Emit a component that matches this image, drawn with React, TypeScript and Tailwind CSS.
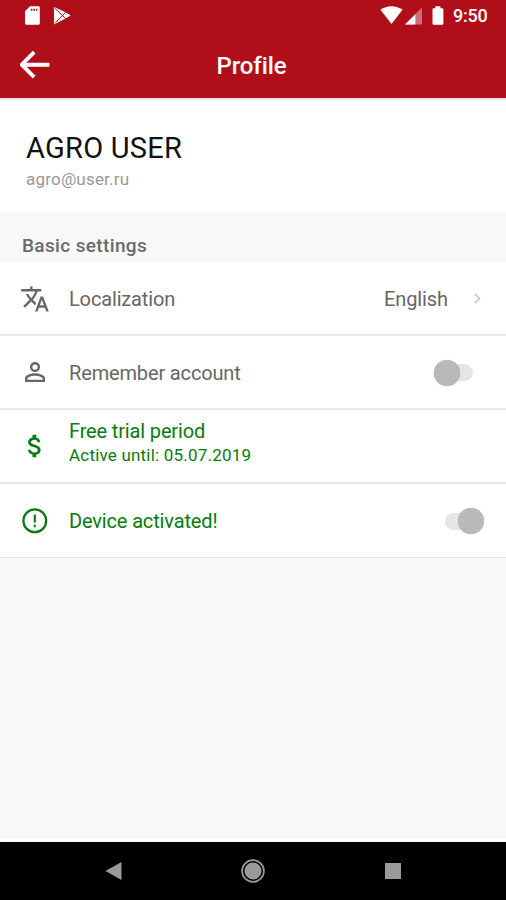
import type { ReactNode } from "react";
import { MdAttachMoney, MdPersonOutline, MdTranslate } from "react-icons/md";

const StatusBar = () => (
  <div className="flex h-8 items-center justify-between pl-6 pr-[17px] text-white">
    <div className="flex items-center">
      <svg className="h-5 w-4" viewBox="0 0 16 20">
        <path
          fill="currentColor"
          fillRule="evenodd"
          d="M6 0.2h8.4a1.4 1.4 0 0 1 1.4 1.4v15.6a1.6 1.6 0 0 1-1.6 1.6H2.6A1.6 1.6 0 0 1 1 17.2V5.2zM6.8 2.8v2h1.6v-2zM9.4 2.8v2h1.6v-2zM12 2.8v2h1.4v-2z"
        />
      </svg>
      <svg className="ml-[13px] h-5 w-[18px]" viewBox="0 0 18 20">
        <path fill="currentColor" d="M1 1 12.5 6.3 17.6 9.4 12.5 12.6 1 18.4z" />
        <path
          d="M1.8 2.2 12.8 12.8M1.8 17.4 12.8 6.2"
          fill="none"
          stroke="#b00f19"
          strokeWidth="1"
        />
      </svg>
    </div>
    <div className="flex items-center">
      <svg className="h-5 w-[23px]" viewBox="0 0 23 20">
        <path fill="currentColor" d="M0.5 3.8C7-1 16-1 22.5 3.8L11.5 18z" />
      </svg>
      <svg className="ml-[2px] h-5 w-[17px]" viewBox="0 0 17 20">
        <path fill="currentColor" opacity="0.4" d="M17 1.6v17H0z" />
        <path fill="currentColor" d="M10.4 8.2v10.4H0z" />
      </svg>
      <svg className="ml-[10px] h-5 w-[12px]" viewBox="0 0 12 20">
        <path
          fill="currentColor"
          d="M3.4 0.3h5v2h1.8a1.2 1.2 0 0 1 1.2 1.2v14a1.2 1.2 0 0 1-1.2 1.2H1.7a1.2 1.2 0 0 1-1.2-1.2v-14a1.2 1.2 0 0 1 1.2-1.2h1.7z"
        />
      </svg>
      <span className="ml-[9px] w-[36px] whitespace-nowrap text-lg font-medium leading-none tracking-[-0.2px]">9:50</span>
    </div>
  </div>
);

const Header = () => (
  <header className="h-[98px] shrink-0 bg-[#b00f19]">
    <StatusBar />
    <div className="grid h-[66px] grid-cols-[1fr_auto_1fr] items-center pl-5 pr-[23px] text-white">
      <button aria-label="Back" className="w-[30px]">
        <svg className="h-[30px] w-[30px]" viewBox="0 0 30 30">
          <path
            d="M14.2 2.2 1.8 14.7l12.4 12.5M2 14.7h27.4"
            fill="none"
            stroke="currentColor"
            strokeWidth="3.9"
          />
        </svg>
      </button>
      <h1 className="pt-[2px] text-[24px] font-medium leading-none tracking-[-0.1px]">Profile</h1>
    </div>
  </header>
);

type RowProps = {
  icon: ReactNode;
  color?: string;
  border?: string;
  children: ReactNode;
  trailing?: ReactNode;
};

const Row = ({ icon, color = "text-[#666666]", border = "border-b-2", children, trailing }: RowProps) => (
  <li className={`flex h-[74px] items-center border-[#e6e6e6] bg-white pl-5 pt-px ${border} ${color}`}>
    <span className="flex w-[30px] shrink-0 justify-center">{icon}</span>
    <div className="ml-[19px] grow text-[20px] leading-6 tracking-[-0.15px]">{children}</div>
    {trailing}
  </li>
);

const AlertIcon = () => (
  <svg className="size-[26px]" viewBox="0 0 26 26" fill="none" stroke="currentColor">
    <circle cx="12.8" cy="12.8" r="11.4" strokeWidth="2.3" />
    <path d="M12.8 6.6v8M12.8 16.8v2.4" strokeWidth="2.1" />
  </svg>
);

const Toggle = ({ on = false }: { on?: boolean }) => (
  <span
    className={`flex h-[26px] w-[39px] items-center ${on ? "mr-[22px] flex-row-reverse" : "mr-[33px]"}`}
    role="switch"
    aria-checked={on}
  >
    <span className="z-10 size-[26px] shrink-0 rounded-full bg-[#b9b9b9] shadow-[0_0_1px_#aaa]" />
    <span className={`h-[17px] w-[26px] shrink-0 rounded-full bg-[#e5e5e5] ${on ? "-mr-[13px]" : "-ml-[13px]"}`} />
  </span>
);

const NavBar = () => (
  <nav className="flex h-[58px] shrink-0 items-center justify-between bg-black pl-[105px] pr-[105px] text-[#9a9a9a]">
    <svg className="h-5 w-[18px]" viewBox="0 0 18 20">
      <path fill="currentColor" d="M16.5 1v18L0.5 10z" />
    </svg>
    <svg className="mr-[2px] size-6" viewBox="0 0 24 24">
      <circle cx="12" cy="12" r="10.9" fill="none" stroke="currentColor" strokeWidth="1.7" />
      <circle cx="12" cy="12" r="8.5" fill="currentColor" />
    </svg>
    <span className="size-4 bg-[#9a9a9a]" />
  </nav>
);

const App = () => (
  <div className="flex h-[900px] w-[506px] flex-col bg-[#f8f8f8] font-['Roboto',sans-serif]">
    <Header />
    <section className="h-[115px] shrink-0 border-t-2 border-[#e9e9e9] bg-white pl-[26px] pt-[32px]">
      <h2 className="text-[29px] leading-[32px] tracking-[0.25px] text-[#111111]">AGRO USER</h2>
      <p className="mt-[5px] text-[17px] leading-5 tracking-[0.2px] text-[#999999]">agro@user.ru</p>
    </section>
    <h3 className="flex h-[49px] shrink-0 items-end pb-1 pl-[22px] text-[19px] font-medium leading-6 tracking-[0.36px] text-[#6a6a6a]">
      Basic settings
    </h3>
    <ul className="shrink-0">
      <Row
        icon={<MdTranslate size={30} />}
        trailing={
          <span className="mr-6 flex items-center text-[20px] leading-6 tracking-[-0.1px]">
            English
            <svg className="ml-[26px] h-3 w-2" viewBox="0 0 8 12">
              <path d="M1 1 5.6 5.5 1 10" fill="none" stroke="#c4c4c4" strokeWidth="1.6" />
            </svg>
          </span>
        }
      >
        Localization
      </Row>
      <Row icon={<MdPersonOutline size={30} className="mb-px" />} trailing={<Toggle />}>
        Remember account
      </Row>
      <Row icon={<MdAttachMoney size={30} className="mb-[2px]" />} color="text-[#087a10]">
        <div className="pb-[7px]">
          <p>Free trial period</p>
          <p className="text-[17px] leading-[25px] tracking-[0.2px]">Active until: 05.07.2019</p>
        </div>
      </Row>
      <Row icon={<AlertIcon />} color="text-[#087a10]" border="border-b" trailing={<Toggle on />}>
        Device activated!
      </Row>
    </ul>
    <div className="grow border-b-[3px] border-white" />
    <NavBar />
  </div>
);

export default App;
